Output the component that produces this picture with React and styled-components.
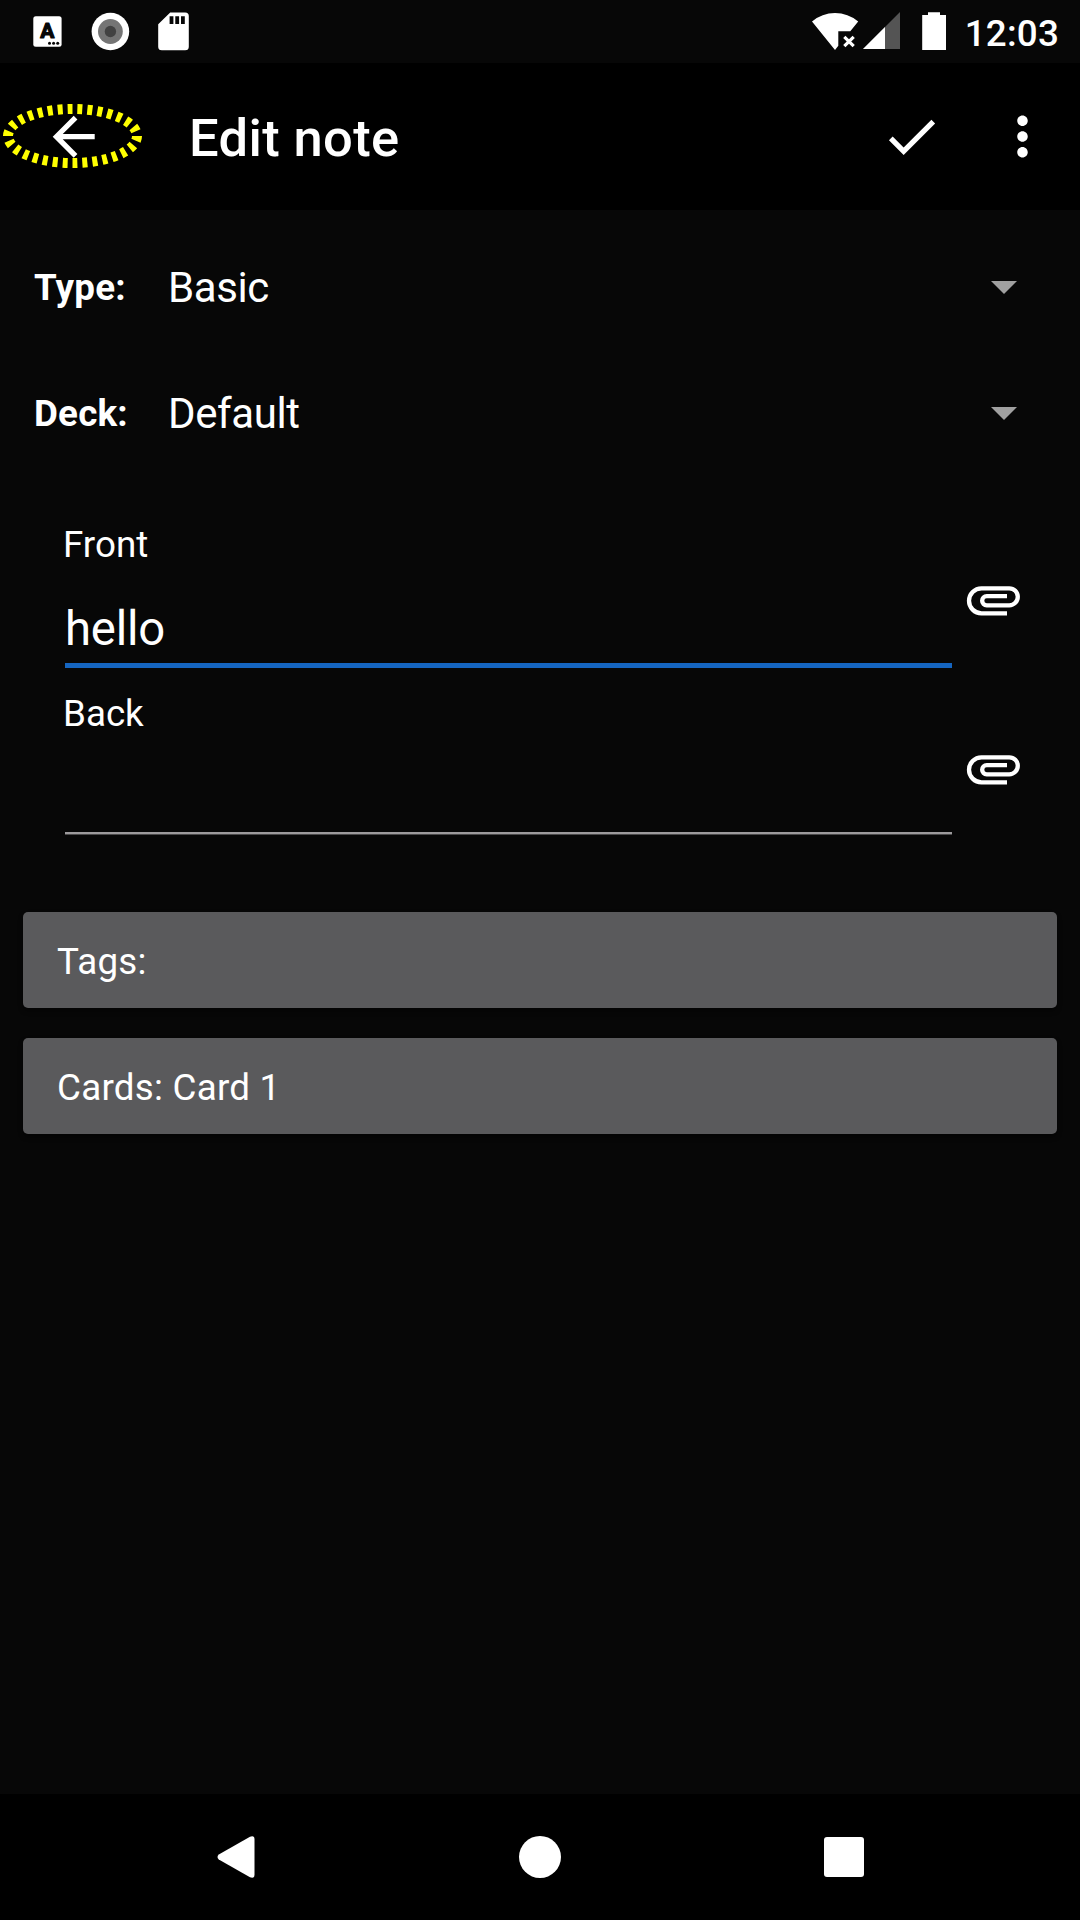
import React from "react";
import styled, { createGlobalStyle } from "styled-components";

const GlobalStyle = createGlobalStyle`
  * { box-sizing: border-box; }
  body { margin: 0; background: #070707; }
  svg { display: block; flex: none; }
`;

const Screen = styled.div`
  display: flex;
  flex-direction: column;
  width: 1080px;
  height: 1920px;
  background: #070707;
  color: #fff;
  font-family: Roboto, "Liberation Sans", sans-serif;
  font-size: 36.75px;
  overflow: hidden;
`;

const StatusBar = styled.header`
  display: flex;
  align-items: flex-start;
  justify-content: space-between;
  height: 63px;
  padding: 0 21px 0 32px;
`;

const StatusGroup = styled.div`
  display: flex;
`;

const Clock = styled.time`
  margin-left: 17px;
  line-height: 67px;
  font-size: 36.75px;
  font-weight: 500;
  letter-spacing: 0.2px;
`;

const AppBar = styled.nav`
  display: flex;
  align-items: center;
  height: 147px;
  background: #000;
`;

const IconButton = styled.button`
  display: grid;
  place-items: center;
  width: ${(p) => p.$width}px;
  height: 147px;
  padding: 0;
  border: 0;
  background: none;
  color: #fff;
`;

const Title = styled.h1`
  flex: 1;
  margin: 0;
  padding: 2px 0 0 43px;
  font-size: 52.5px;
  font-weight: 500;
  line-height: 60px;
  letter-spacing: 0.35px;
`;

const Content = styled.main`
  flex: 1;
  padding: 14px 23px 0;
`;

const SpinnerRow = styled.div`
  display: flex;
  align-items: center;
  height: 126px;
  padding: 0 40px 0 11px;
`;

const SpinnerLabel = styled.span`
  width: 134px;
  font-weight: 700;
  letter-spacing: 0.2px;
`;

const SpinnerValue = styled.span`
  flex: 1;
  font-size: 42px;
  letter-spacing: -0.4px;
`;

const Fields = styled.section`
  padding: 43px 32px 0 41px;
`;

const FieldRow = styled.div`
  display: flex;
  gap: 10px;
  height: 169px;
`;

const Field = styled.label`
  display: flex;
  flex-direction: column;
  width: 888px;
`;

const FieldName = styled.span`
  height: 52px;
  margin-left: -1px;
  line-height: 52px;
`;

const FieldInput = styled.span`
  height: ${(p) => (p.$focused ? 97 : 94)}px;
  margin-left: 1px;
  padding-top: 28px;
  line-height: 60px;
  font-size: 47.25px;
  letter-spacing: -0.2px;
  border-bottom: ${(p) => (p.$focused ? "5px solid #1565c0" : "2px solid #9c9a9c")};
  box-shadow: ${(p) => (p.$focused ? "none" : "0 1px 0 #4a494a")};
`;

const AttachButton = styled(IconButton)`
  width: 63px;
  height: 63px;
  margin-top: 49px;
`;

const Actions = styled.section`
  display: flex;
  flex-direction: column;
  gap: 30px;
  padding-top: 55px;
`;

const ActionButton = styled.button`
  height: 96px;
  padding: 3px 34px 0;
  border: 0;
  border-radius: 5px;
  background: #5a5a5c;
  box-shadow: 0 3px 5px rgba(0, 0, 0, 0.45);
  color: #fff;
  font: inherit;
  letter-spacing: 0.25px;
  text-align: left;
`;

const NavigationBar = styled.footer`
  display: flex;
  align-items: center;
  justify-content: space-between;
  height: 126px;
  padding: 0 216px 0 217px;
  background: #000;
`;

const MaterialIcon = ({ d }) => (
  <svg width="63" height="63" viewBox="0 0 24 24" fill="currentColor">
    <path d={d} />
  </svg>
);

const CHECK = "M9 16.17L4.83 12l-1.42 1.41L9 19 21 7l-1.41-1.41z";
const MORE =
  "M12 8c1.1 0 2-.9 2-2s-.9-2-2-2-2 .9-2 2 .9 2 2 2zm0 2c-1.1 0-2 .9-2 2s.9 2 2 2 2-.9 2-2-.9-2-2-2zm0 6c-1.1 0-2 .9-2 2s.9 2 2 2 2-.9 2-2-.9-2-2-2z";

const PaperclipIcon = () => (
  <svg width="63" height="63" viewBox="0 0 63 63" fill="none">
    <path
      d="M45 45.3H19.5a12.5 12.5 0 0 1 0-25H47.3a8.5 8.5 0 0 1 0 17H24.7a4.55 4.55 0 0 1 0-9.1H45"
      stroke="#fff"
      strokeWidth="4.3"
    />
  </svg>
);

const Notifications = () => (
  <svg width="160" height="63" viewBox="32 0 160 63">
    <rect x="33.3" y="16.2" width="28.3" height="30.5" rx="2.5" fill="#fff" />
    <text x="47.3" y="38.4" textAnchor="middle" fontFamily="Roboto" fontSize="21" fontWeight="700" fill="#070707" stroke="#070707" strokeWidth="1.2" strokeLinejoin="round">A</text>
    <g fill="#070707">
      <circle cx="49.5" cy="43.2" r="1.5" />
      <circle cx="53.6" cy="43.2" r="1.5" />
      <circle cx="57.7" cy="43.2" r="1.5" />
    </g>
    <circle cx="110.4" cy="31.5" r="18.8" fill="#fff" />
    <circle cx="110.4" cy="31.5" r="12.4" fill="#757575" />
    <circle cx="110.4" cy="31.5" r="5.7" fill="#424242" />
    <path d="M170.2 12.5H185.2a3.6 3.6 0 0 1 3.6 3.6V46.7a3.6 3.6 0 0 1-3.6 3.6H161.8a3.6 3.6 0 0 1-3.6-3.6V24.3z" fill="#fff" />
    <path d="M169.6 16.3h3.8v7.7h-3.8zM175.3 16.3h3.8v7.7h-3.8zM181 16.3h3.8v7.7H181z" fill="#070707" />
  </svg>
);

const SystemIcons = () => (
  <svg width="138" height="63" viewBox="810 0 138 63">
    <path d="M812 21.5Q822 13 835 13T858.2 21.5L850.3 31.2H838.3V45.8L835 49.9z" fill="#fff" />
    <path d="M844.3 36.8l9.4 9.4M853.7 36.8l-9.4 9.4" stroke="#fff" strokeWidth="3.2" />
    <path d="M900 12V49H863z" fill="#545454" />
    <path d="M885 27V49H863z" fill="#fff" />
    <path d="M928 12.2h12v2.7h6V50h-23.8V14.9h5.8z" fill="#fff" />
  </svg>
);

const FocusedBackIcon = () => (
  <svg width="146" height="147" viewBox="0 63 146 147">
    <ellipse cx="72.5" cy="136" rx="64.5" ry="27" fill="none" stroke="#ff0" strokeWidth="10" strokeDasharray="5 5" pathLength="300" />
    <path transform="translate(42.2 105.2) scale(2.625)" fill="#fff" d="M20 11H7.83l5.59-5.59L12 4l-8 8 8 8 1.41-1.41L7.83 13H20v-2z" />
  </svg>
);

const DropDownArrow = () => (
  <svg width="26" height="13" viewBox="0 0 26 13">
    <path d="M0 0h26L13 13z" fill="#a0a0a0" />
  </svg>
);

const Spinner = ({ label, value }) => (
  <SpinnerRow>
    <SpinnerLabel>{label}</SpinnerLabel>
    <SpinnerValue>{value}</SpinnerValue>
    <DropDownArrow />
  </SpinnerRow>
);

const NoteField = ({ name, value, focused }) => (
  <FieldRow>
    <Field>
      <FieldName>{name}</FieldName>
      <FieldInput $focused={focused}>{value}</FieldInput>
    </Field>
    <AttachButton aria-label="Attach">
      <PaperclipIcon />
    </AttachButton>
  </FieldRow>
);

export default function App() {
  return (
    <Screen>
      <GlobalStyle />
      <StatusBar>
        <Notifications />
        <StatusGroup>
          <SystemIcons />
          <Clock>12:03</Clock>
        </StatusGroup>
      </StatusBar>
      <AppBar>
        <IconButton $width={146} aria-label="Back">
          <FocusedBackIcon />
        </IconButton>
        <Title>Edit note</Title>
        <IconButton $width={105} aria-label="Save">
          <MaterialIcon d={CHECK} />
        </IconButton>
        <IconButton $width={116} aria-label="More options">
          <MaterialIcon d={MORE} />
        </IconButton>
      </AppBar>
      <Content>
        <Spinner label="Type:" value="Basic" />
        <Spinner label="Deck:" value="Default" />
        <Fields>
          <NoteField name="Front" value="hello" focused />
          <NoteField name="Back" value="" />
        </Fields>
        <Actions>
          <ActionButton>Tags:</ActionButton>
          <ActionButton>Cards: Card 1</ActionButton>
        </Actions>
      </Content>
      <NavigationBar>
        <svg width="38" height="42" viewBox="0 0 38 42">
          <path d="M1.8 18.4L33 .7Q37.5-1 37.5 3.5V38.5Q37.5 43 33 41.3L1.8 23.6Q-.8 21 1.8 18.4z" fill="#fff" />
        </svg>
        <svg width="42" height="42" viewBox="0 0 42 42">
          <circle cx="21" cy="21" r="21" fill="#fff" />
        </svg>
        <svg width="40" height="40" viewBox="0 0 40 40">
          <rect width="40" height="40" rx="3" fill="#fff" />
        </svg>
      </NavigationBar>
    </Screen>
  );
}
